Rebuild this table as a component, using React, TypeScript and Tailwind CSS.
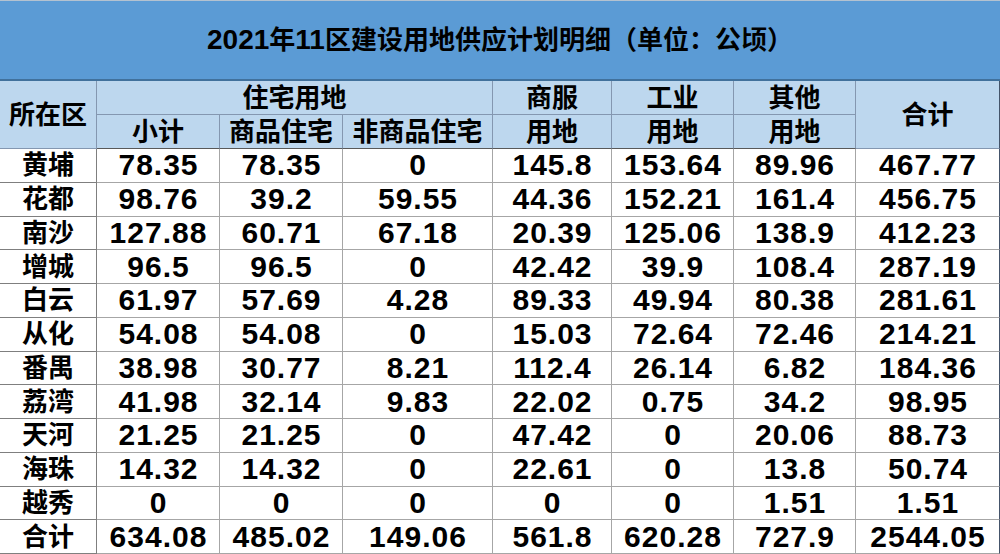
const font = { fontFamily: '"Liberation Sans", "Noto Sans CJK SC", sans-serif' };

const rows: string[][] = [
  ["黄埔", "78.35", "78.35", "0", "145.8", "153.64", "89.96", "467.77"],
  ["花都", "98.76", "39.2", "59.55", "44.36", "152.21", "161.4", "456.75"],
  ["南沙", "127.88", "60.71", "67.18", "20.39", "125.06", "138.9", "412.23"],
  ["增城", "96.5", "96.5", "0", "42.42", "39.9", "108.4", "287.19"],
  ["白云", "61.97", "57.69", "4.28", "89.33", "49.94", "80.38", "281.61"],
  ["从化", "54.08", "54.08", "0", "15.03", "72.64", "72.46", "214.21"],
  ["番禺", "38.98", "30.77", "8.21", "112.4", "26.14", "6.82", "184.36"],
  ["荔湾", "41.98", "32.14", "9.83", "22.02", "0.75", "34.2", "98.95"],
  ["天河", "21.25", "21.25", "0", "47.42", "0", "20.06", "88.73"],
  ["海珠", "14.32", "14.32", "0", "22.61", "0", "13.8", "50.74"],
  ["越秀", "0", "0", "0", "0", "0", "1.51", "1.51"],
  ["合计", "634.08", "485.02", "149.06", "561.8", "620.28", "727.9", "2544.05"],
];

function HeadCell({ children, className = "" }: { children: React.ReactNode; className?: string }) {
  return (
    <div
      className={
        "flex items-center justify-center bg-[#bdd7ee] border-r border-b border-[#8497b0] text-[26px] font-bold text-black leading-none " +
        className
      }
    >
      {children}
    </div>
  );
}

export default function App() {
  return (
    <div className="w-[1000px] h-[554px] bg-white overflow-hidden" style={font}>
      <div className="h-[81px] bg-[#5b9bd5] border-t border-[#b4c2d0] border-b-2 border-b-[#41719c] flex items-center justify-center">
        <h1 className="text-[26px] font-bold text-black leading-none">
          <span className="text-[28px]">2021</span>年<span className="text-[28px]">11</span>区建设用地供应计划明细（单位：公顷）
        </h1>
      </div>
      <div className="grid grid-cols-[97px_123px_123px_150px_119px_122px_122px_144px] grid-rows-[34px_34px_repeat(12,33.75px)]">
        <HeadCell className="row-span-2">所在区</HeadCell>
        <HeadCell className="col-span-3">住宅用地</HeadCell>
        <HeadCell>商服</HeadCell>
        <HeadCell>工业</HeadCell>
        <HeadCell>其他</HeadCell>
        <HeadCell className="row-span-2 border-r-[#44546a]">合计</HeadCell>
        <HeadCell className="border-b-[#595959]">小计</HeadCell>
        <HeadCell className="border-b-[#595959]">商品住宅</HeadCell>
        <HeadCell className="border-b-[#595959]">非商品住宅</HeadCell>
        <HeadCell className="border-b-[#595959]">用地</HeadCell>
        <HeadCell className="border-b-[#595959]">用地</HeadCell>
        <HeadCell className="border-b-[#595959]">用地</HeadCell>
        {rows.map((row, r) =>
          row.map((cell, c) => (
            <div
              key={r + "-" + c}
              className={
                c === 0
                  ? "flex items-center justify-center border-r border-b border-[#7f7f7f] text-[26px] font-bold text-black leading-none"
                  : c === 7
                  ? "flex items-center justify-center border-r border-b border-[#a6a6a6] border-r-[#44546a] text-[30px] font-bold text-black leading-none tracking-[1px] pl-[1px]"
                  : "flex items-center justify-center border-r border-b border-[#a6a6a6] text-[30px] font-bold text-black leading-none tracking-[1px] pl-[1px]"
              }
            >
              {cell}
            </div>
          ))
        )}
      </div>
    </div>
  );
}
